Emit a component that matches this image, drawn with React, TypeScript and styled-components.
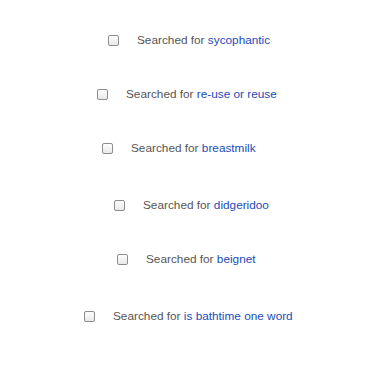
import React from "react";
import styled, { createGlobalStyle } from "styled-components";

interface SearchItem {
  term: string;
  left: number;
  top: number;
}

const searches: SearchItem[] = [
  { term: "sycophantic", left: 108, top: 34 },
  { term: "re-use or reuse", left: 97, top: 42 },
  { term: "breastmilk", left: 102, top: 42 },
  { term: "didgeridoo", left: 114, top: 45 },
  { term: "beignet", left: 117, top: 42 },
  { term: "is bathtime one word", left: 84, top: 45 },
];

const GlobalStyle = createGlobalStyle`
  html, body {
    margin: 0;
    padding: 0;
    background: #ffffff;
  }
  body {
    font-family: "Liberation Sans", Arial, Helvetica, sans-serif;
  }
`;

const Page = styled.div`
  display: flex;
  flex-direction: column;
  width: 375px;
  height: 366px;
  background: #fff;
`;

const Row = styled.label<{ $left: number; $top: number }>`
  display: flex;
  align-items: center;
  height: 12px;
  margin-top: ${(p) => p.$top}px;
  padding-left: ${(p) => p.$left}px;
`;

const CheckBox = styled.span`
  display: inline-block;
  box-sizing: border-box;
  width: 11px;
  height: 11px;
  border: 1px solid #8d8d8d;
  border-radius: 2px;
  background: linear-gradient(#fdfdfd, #e9e9e9);
  margin-right: 18px;
  flex: none;
`;

const Label = styled.span`
  font-size: 11.8px;
  line-height: 12px;
  color: #555555;
  white-space: nowrap;
`;

const Term = styled.a`
  color: #1b4cb8;
  text-decoration: none;
`;

const App: React.FC = () => (
  <>
    <GlobalStyle />
    <Page>
      {searches.map((s) => (
        <Row key={s.term} $left={s.left} $top={s.top}>
          <CheckBox />
          <Label>
            Searched for <Term>{s.term}</Term>
          </Label>
        </Row>
      ))}
    </Page>
  </>
);

export default App;
